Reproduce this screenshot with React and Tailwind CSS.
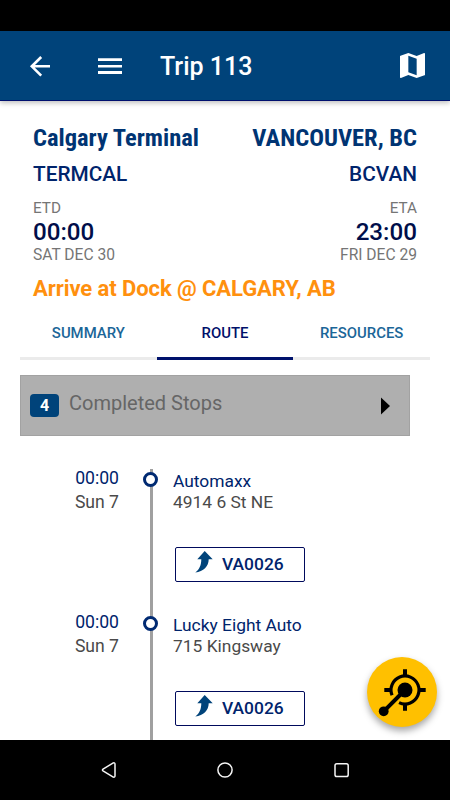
// src/pages/TripDetails.jsx
import React, { useState } from 'react';

const STOPS = [
  { id: 1, time: '00:00', day: 'Sun 7', name: 'Automaxx', address: '4914 6 St NE', unit: 'VA0026' },
  { id: 2, time: '00:00', day: 'Sun 7', name: 'Lucky Eight Auto', address: '715 Kingsway', unit: 'VA0026' },
];

const TABS = ['SUMMARY', 'ROUTE', 'RESOURCES'];

const Header = () => (
  <header className="relative h-[70px] shrink-0 bg-[#00437a] border-b border-[#00106e] shadow-[0_2px_5px_rgba(0,0,0,0.25)] flex items-center pl-7 pr-[25px] text-white">
    <button aria-label="Back">
      <svg viewBox="0 0 24 24" className="w-[24px] h-[24px] block" fill="none" stroke="currentColor" strokeWidth="2.6">
        <path d="M22 12.3H4M13.200 3L3.800 12.3L13.200 21.6" />
      </svg>
    </button>
    <button aria-label="Menu" className="ml-[46px]">
      <svg viewBox="0 0 24 18" className="w-[24px] h-[18px] block" fill="currentColor">
        <path d="M0 1.2h24v2.9H0zM0 8h24v2.6H0zM0 14h24v2.9H0z" />
      </svg>
    </button>
    <h1 className="ml-[38px] mt-[2px] text-[25px] leading-8 font-medium whitespace-nowrap">Trip 113</h1>
    <button aria-label="Map" className="ml-auto">
      <svg viewBox="3 3 18 18" className="w-[25px] h-[25px] block" fill="currentColor">
        <path d="M20.5 3l-.16.03L15 5.1 9 3 3.36 4.9c-.21.07-.36.25-.36.48V20.500c0 .28.22.5.5.5l.16-.03L9 18.900l6 2.100 5.640-1.900c.21-.07.36-.25.36-.48V3.500c0-.28-.22-.5-.5-.5zM15 19l-6-2.110V5l6 2.110V19z" />
      </svg>
    </button>
  </header>
);

const Place = ({ city, code, label, time, date, right }) => (
  <div className={right ? 'flex flex-col items-end' : 'flex flex-col items-start'}>
    <h2 className="font-['Roboto_Condensed','Roboto'] [font-stretch:75%] text-[24.5px] leading-7 font-bold text-[#003473] whitespace-nowrap">
      {city}
    </h2>
    <p className="mt-2 text-[20.8px] leading-7 font-medium text-[#00246c]">{code}</p>
    <p className="mt-3 text-[15.3px] leading-4 text-[#757575]">{label}</p>
    <p className="pt-px text-[24.2px] leading-[30px] font-medium text-[#000e4a]">{time}</p>
    <p className="text-[15.6px] leading-4 text-[#757575]">{date}</p>
  </div>
);

const Stop = ({ stop }) => (
  <li className="h-[144px] flex">
    <div className="w-[119px] text-right text-[17.6px] leading-6 -mt-[3px]">
      <p className="text-[#00246c]">{stop.time}</p>
      <p className="text-[#4a4a4a]">{stop.day}</p>
    </div>
    <div className="relative ml-[31px] w-[3px] bg-[#a0a0a0]">
      <span className="absolute -left-[7px] top-[3px] size-[15px] rounded-full border-3 border-[#002a72] bg-white" />
    </div>
    <div className="ml-[20px] text-[17.4px] leading-[21px] pt-[2px]">
      <p className="text-[#00246c]">{stop.name}</p>
      <p className="text-[#4a4a4a]">{stop.address}</p>
      <button className="mt-[34px] ml-[2px] w-[130px] h-[35px] rounded-[2px] border border-[#000a5c] flex items-center pl-[19px] font-medium text-[#00246c]">
        <svg viewBox="0 0 18 22" className="w-[18px] h-[22px] shrink-0 -mt-[6px]" fill="#00437a">
          <path d="M9.700 0L17.700 8.300H13.700C13.700 15.500 8.500 20.500 0.300 21.500C4.500 18.500 6.300 14 6.300 8.300H2.300Z" />
        </svg>
        <span className="ml-[9px]">{stop.unit}</span>
      </button>
    </div>
  </li>
);

const NavBar = () => (
  <nav className="h-[60px] shrink-0 bg-black flex items-center justify-center">
    <svg viewBox="0 0 16 18" className="w-4 h-[18px]" fill="none" stroke="#f5f5f5" strokeWidth="1.5" strokeLinejoin="round">
      <path d="M12.300 1.900L2 8.100Q.9 9 2 9.900L12.300 16.100Q14 16.500 14 14.800V3.200Q14 1.500 12.300 1.900Z" />
    </svg>
    <svg viewBox="0 0 16 16" className="w-4 h-4 ml-[100px]" fill="none" stroke="#f5f5f5" strokeWidth="1.5">
      <circle cx="8" cy="8" r="7.100" />
    </svg>
    <svg viewBox="0 0 16 16" className="w-4 h-4 ml-[101px]" fill="none" stroke="#f5f5f5" strokeWidth="1.5">
      <rect x="1" y="1.700" width="13.200" height="12.800" rx="1.800" />
    </svg>
  </nav>
);

const App = () => {
  const [activeTab, setActiveTab] = useState('ROUTE');

  return (
    <div className="relative w-[450px] h-[800px] overflow-hidden bg-white flex flex-col font-['Roboto',sans-serif]">
      <div className="h-[31px] shrink-0 bg-black" />
      <Header />

      <main className="flex-1 min-h-0 overflow-hidden flex flex-col">
        {/* trip summary */}
        <section className="shrink-0 pt-[23px] px-[33px]">
          <div className="flex justify-between">
            <Place city="Calgary Terminal" code="TERMCAL" label="ETD" time="00:00" date="SAT DEC 30" />
            <Place city="VANCOUVER, BC" code="BCVAN" label="ETA" time="23:00" date="FRI DEC 29" right />
          </div>
          <p className="mt-[11px] text-[22px] leading-[30px] font-bold tracking-[-0.08px] text-[#ff900e] whitespace-nowrap">
            Arrive at Dock @ CALGARY, AB
          </p>
        </section>

        {/* tabs */}
        <div className="shrink-0 mx-5 h-14 grid grid-cols-3">
          {TABS.map((tab) => (
            <button
              key={tab}
              onClick={() => setActiveTab(tab)}
              className={`pt-[5px] text-[14.9px] font-medium border-b-3 ${
                activeTab === tab ? 'text-[#00106a] border-[#00126c]' : 'text-[#1b6698] border-[#ebebeb]'
              }`}
            >
              {tab}
            </button>
          ))}
        </div>

        {/* completed stops */}
        <button className="shrink-0 mt-[15px] ml-5 w-[390px] h-[61px] bg-[#afafaf] border border-[#a2a2a2] flex items-center pl-[9px] pr-[19px]">
          <span className="w-[29px] h-[23px] rounded-[4px] bg-[#00437a] text-white text-[16px] font-bold flex items-center justify-center">
            4
          </span>
          <span className="ml-[10px] -mt-[5px] text-[20px] text-[#666666]">Completed Stops</span>
          <svg viewBox="0 0 9 18" className="ml-auto w-[9px] h-[18px]">
            <path d="M0 0.500L9 9L0 17.500Z" />
          </svg>
        </button>

        {/* route timeline */}
        <ul className="shrink-0 mt-[33px]">
          {STOPS.map((stop) => (
            <Stop key={stop.id} stop={stop} />
          ))}
        </ul>
      </main>

      <NavBar />

      <button
        aria-label="Locate"
        className="absolute left-[367px] top-[657px] size-[70px] rounded-full bg-[#ffc000] shadow-[0_4px_7px_rgba(0,0,0,0.35)]"
      >
        <svg viewBox="0 0 70 70" className="size-[70px]" fill="none" stroke="#000">
          <circle cx="38" cy="33" r="14" strokeWidth="3.200" strokeDasharray="77 11" transform="rotate(158 38 33)" />
          <path d="M38 12.300v6M38 47.700v6M17.300 33h6M52.700 33h6" strokeWidth="4" />
          <path d="M38 33L16.700 54.300" strokeWidth="4" />
          <circle cx="38" cy="33" r="7.500" fill="#000" stroke="none" />
          <circle cx="16.700" cy="54.300" r="4.900" fill="#000" stroke="none" />
        </svg>
      </button>
    </div>
  );
};

export default App;
